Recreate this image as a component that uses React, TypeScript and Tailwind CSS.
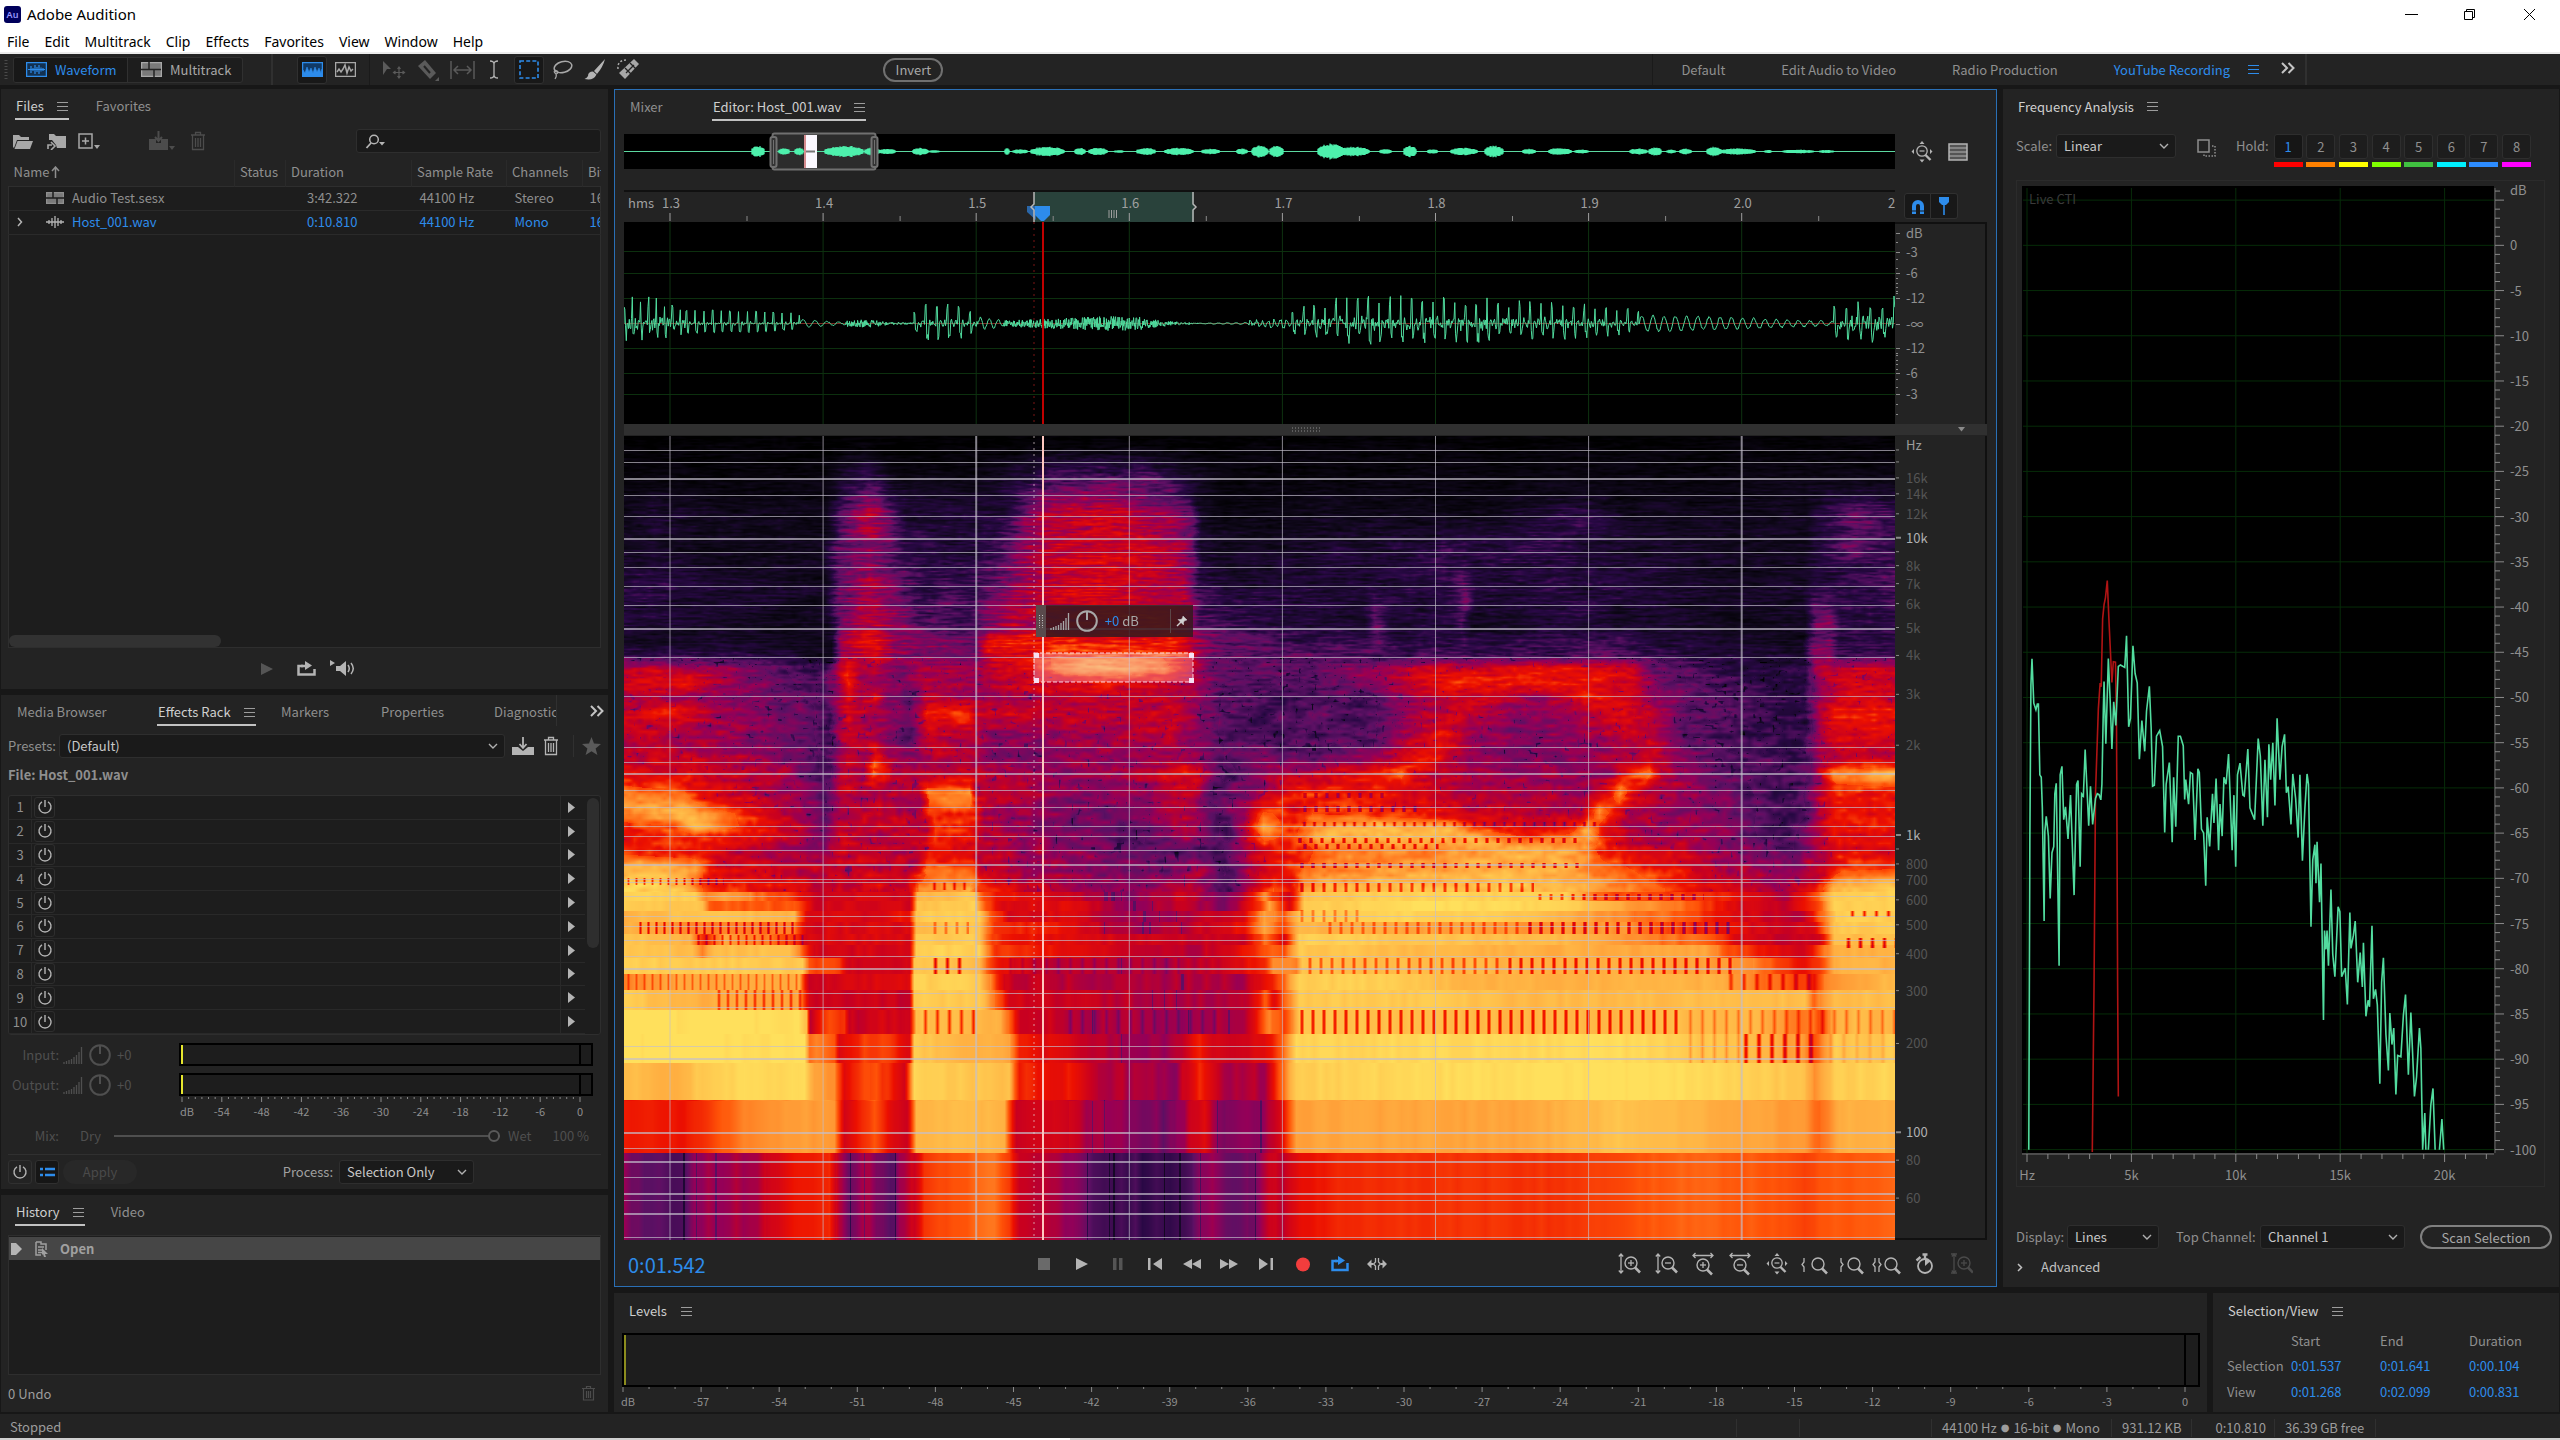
import React, { useLayoutEffect, useMemo, useRef } from 'react';

type Pt = [number, number];

/* ---------- helpers ---------- */

const TRACK_W = 1271;
const SPEC_H = 804;
const px = (u: number) => `${(u / TRACK_W) * 100}%`;
const sy = (v: number) => `${(v / SPEC_H) * 100}%`;

function makeRandom(seed: number) {
  let s = seed;
  return () => {
    s = (s * 1664525 + 1013904223) >>> 0;
    return s / 4294967296;
  };
}

function lerpPts(pts: Pt[], x: number) {
  if (x <= pts[0][0]) return pts[0][1];
  for (let i = 1; i < pts.length; i++) {
    if (x <= pts[i][0]) {
      const [x0, y0] = pts[i - 1];
      const [x1, y1] = pts[i];
      return y0 + ((y1 - y0) * (x - x0)) / (x1 - x0);
    }
  }
  return pts[pts.length - 1][1];
}

const parse = (s: string): Pt[] =>
  s.split(' ').map((p) => {
    const [a, b] = p.split(':');
    return [Number(a), Number(b)] as Pt;
  });

/* ---------- spectrogram data: frequency rows of "time:level" ---------- */

const SMOOTH_ROWS: [number, Pt[]][] = (
  [
    [0, '0:0 1271:0.1'],
    [14, '0:0.2 200:0.2 240:0.8 270:0.2 400:0.3 480:0.8 560:0.3 1271:0.3'],
    [45, '0:0.5 200:0.5 220:1.8 245:2.6 275:0.9 350:0.6 385:1.6 430:3.2 520:3.3 565:1.4 600:0.5 900:0.5 1271:0.8'],
    [80, '0:1 30:1.9 120:1 205:1 218:2.8 245:4.8 265:3.2 280:1.8 340:1.8 375:2 400:4 430:5 500:5.3 550:4.3 568:3.2 576:1.2 600:0.8 720:1 860:1 910:1.6 960:2.3 1000:1.5 1060:1 1180:1 1190:2 1230:3.3 1271:2.6'],
    [110, '0:1 200:0.9 216:3 245:4.3 262:3.4 280:2 350:1.6 385:3.2 420:5 490:5.4 550:4.8 566:3.8 575:1.5 600:1 700:1.6 810:2 820:3 832:2.2 930:2.2 1000:1.3 1180:1 1230:3.3 1271:2.3'],
    [150, '0:2.4 60:1.8 100:1.6 200:1.2 214:3.2 245:4.6 270:3.9 300:2.4 345:2.4 372:3.2 395:4.5 450:5.5 520:5.6 558:4.9 573:2.4 620:1.6 760:1.9 825:2.2 838:3.4 850:2 960:1.9 1100:1.4 1180:1.2 1195:2 1250:2.2 1271:3'],
    [190, '0:1.5 200:1.1 213:3.5 240:5.2 262:4.6 300:3.1 345:2.8 364:4 385:5 450:5.7 540:5.7 563:4.9 578:3 640:2.1 740:1.5 752:3.2 770:1.5 830:1.8 840:2.8 850:1.3 960:1.8 1100:1 1180:1 1190:3.4 1205:3.4 1215:2.2 1271:2.2'],
    [206, '0:1.2 100:1.2 206:1 215:4.6 240:5.8 252:6.2 270:4.6 310:3.8 350:3.6 365:6 400:6.8 450:6.6 550:6.5 570:4.8 590:3.4 640:3 740:2.2 752:3 770:2 1000:2.6 1040:1.6 1180:1.2 1190:3.8 1205:3.8 1215:2.6 1271:2.2'],
    [219, '0:2.4 60:2 180:1.4 206:1.2 216:4.8 250:5.6 270:4.5 310:3.8 350:3.8 365:5.4 400:5.8 425:7 460:7.6 520:7.4 560:6.2 572:4.6 590:3.2 640:3 740:2.6 1000:2.8 1040:2 1180:1.6 1190:4 1205:4 1215:2.6 1271:2.4'],
    [232, '0:4.8 20:5.2 100:4.4 140:3.6 200:2 212:4.5 222:6.2 236:4.6 250:5 280:3.8 300:4.8 345:4.6 365:5 410:6 430:7.4 460:8.2 540:7.6 562:5.8 585:3.6 680:3.5 720:4 800:5.2 850:5.6 960:6.2 1010:5.5 1030:3.6 1100:2 1180:1.8 1192:4.4 1210:4.8 1220:5.4 1271:5.4'],
    [246, '0:5.5 60:6.2 90:4.9 120:4 190:2.6 212:4.5 222:6.4 236:4.6 280:3.6 300:4.9 350:4.5 370:4.7 430:5.8 480:6.2 560:5 600:3 650:2.6 700:3.2 770:4.6 830:6.6 900:6.2 960:6.2 1010:5.4 1030:4 1060:3 1150:2 1180:1.8 1195:4.3 1215:5.4 1271:5.4'],
    [262, '0:4.9 90:4.4 120:3.8 190:2.8 212:4.4 224:5.8 236:4.6 250:6 262:4.2 285:3.2 300:4.9 350:4.6 370:4.4 450:5 560:4.8 600:2.8 650:2.4 690:2.6 740:2.4 770:4 830:5.2 880:4.8 920:4 960:6.2 1010:5.6 1030:4 1100:2.8 1150:2 1180:1.8 1195:4.6 1215:5.4 1271:5.4'],
    [277, '0:5.2 40:6.4 90:4.6 180:3.6 205:2.2 215:4.5 225:5.6 245:4.6 285:3.4 300:5.1 305:6.6 345:6.6 352:5.2 400:5.4 480:5 550:5.2 600:2.8 650:2.6 700:3 740:2.6 790:4.5 850:5.4 890:3.8 960:4.8 1000:6 1030:5 1060:3.2 1100:3.2 1150:2.2 1180:2 1195:4.8 1210:6.3 1271:6.4'],
    [300, '0:4.8 90:4.4 180:3.4 205:2.2 215:4.6 225:5.2 245:4.8 285:3.4 300:5 345:4.8 370:3.8 480:4.6 550:5 600:2.8 650:2.6 700:2.6 750:2.8 790:4.8 825:6.2 850:4.4 890:3.6 960:4.2 1000:5 1030:4.8 1060:3 1150:2 1180:2 1195:4.6 1210:5.6 1271:5.6'],
    [322, '0:5 90:5 180:3.8 200:2.6 212:4.6 222:5.4 240:4.4 250:6.4 262:4.6 290:4 310:5 345:4.8 370:3.8 450:4.2 560:4.7 600:3 640:4 690:3.3 730:4 770:5 800:6.6 820:5 850:4.4 900:3.8 980:4.3 1020:5.2 1040:4.6 1080:3.6 1150:2.6 1180:2.4 1195:4.5 1215:5.2 1271:5.2'],
    [337, '0:6 90:5.2 150:5 190:3.2 205:2.4 215:5 225:5.4 240:4.4 250:7.2 260:6.6 268:5 300:5 345:5 370:4.8 450:4.2 520:4.7 560:6.2 580:4.8 600:2.5 640:4.2 670:5 700:5.2 750:6 775:7.4 790:5.8 815:4.8 900:4.4 985:4.4 1008:7 1022:7.6 1034:5.2 1080:3.6 1150:2.5 1185:3 1195:5 1208:7.6 1271:8.2'],
    [357, '0:7.6 60:7.2 80:5.6 180:4.2 200:3.2 215:5 260:4.6 295:5 305:7.8 345:7.8 352:5 380:5 450:4 520:4.1 570:5.2 590:3.2 620:4 645:5 680:6.6 760:6 850:4.8 960:4.4 982:6 996:7.9 1010:6.2 1030:4.7 1060:4.2 1120:3.2 1170:2.2 1190:4.5 1210:6.4 1271:6.4'],
    [377, '0:7.8 60:8.4 85:7.8 140:6 170:4.8 200:3.6 213:5 230:5.2 250:5.2 295:4.8 305:6.6 350:6.8 360:4.6 480:3.6 560:5 590:3 620:4.5 640:7.2 660:6.8 672:5.8 690:7 780:6.4 870:5 955:4.6 975:7.9 990:6.6 1006:4.8 1050:4.1 1100:3.9 1150:2.6 1180:2.6 1195:5 1210:6.2 1271:6.2'],
    [390, '0:6.6 50:7 70:8.4 120:6.8 180:5 200:3.5 215:5.2 300:5 310:6.9 345:6.7 360:4.7 420:4 520:3.1 560:4.8 600:2.6 620:5 640:8 655:7.2 670:6.6 690:7.8 760:8.3 820:8.3 850:6.6 900:5.8 945:6 962:8 978:6.4 1000:4.8 1100:4.2 1160:2 1190:4.5 1210:6 1271:6'],
    [401, '0:6.4 60:6.4 120:6 180:5 200:3.5 215:5.2 300:5 310:6.6 345:6.4 360:4.7 420:4 520:2.9 560:4.8 600:2.6 620:5 640:7.4 655:7 670:6.8 690:8.3 800:8.4 850:8.3 900:7 945:7.4 965:8.2 980:6 1000:5 1100:4.2 1160:2.2 1190:4.5 1210:6 1271:6'],
    [413, '0:6.5 80:6 100:5.2 200:3.8 215:5.2 290:5 310:5.8 350:6 360:5 450:4.2 520:3.1 590:3 620:5 650:6.4 672:6 690:7.2 800:7.6 880:8.2 940:8 962:7.6 985:5.8 1040:5.4 1100:4.2 1170:3 1195:5 1210:6 1271:6'],
    [430, '0:8.2 70:7.8 90:5.6 190:5 215:5.4 250:5.4 295:5 305:7 350:7 358:5 450:4.2 540:3.5 570:4.6 600:2.8 625:4.8 650:5.5 675:6.8 700:7.6 850:8 940:8.2 970:7.4 1000:7 1060:6 1090:4.8 1170:4.1 1195:5 1215:6.6 1271:6.8'],
    [452, '0:8.8 60:8.5 78:7 100:6.5 160:6 190:5 215:5.7 235:5 255:5.7 285:5 295:7.6 345:8.2 355:6.6 400:5.2 500:3.8 570:4.8 605:3 630:5.4 650:7 668:5.8 680:8 760:8.5 900:8.6 980:7.8 1040:7 1080:5.5 1160:4.3 1190:5.5 1210:8.4 1271:8.7'],
  ] as [number, string][]
).map(([v, s]) => [v, parse(s)]);

const BAND_ROWS: [number, Pt[]][] = (
  [
    [465, '0:8.8 70:8.7 82:7.6 100:8 160:6.8 190:5 240:5.5 285:5.2 293:8.2 350:8.6 360:6.5 380:6 450:5 500:3.8 560:5 600:3.4 630:6 640:7.6 665:5 680:8.5 800:8.8 940:8.7 980:7 1060:6.6 1110:6 1160:4.6 1190:7 1210:8.7 1271:8.7'],
    [475, '0:8.7 78:8.5 85:7.2 170:7 190:5.2 240:5.5 285:5.2 293:8.5 350:8.7 362:6.8 380:5.6 450:5.6 500:4 560:5 600:3.6 630:6 645:8 665:5.4 680:8.6 800:9 940:8.8 980:8.2 1060:7.4 1110:5.6 1160:4.6 1190:6.6 1210:8.7 1271:8.7'],
    [486, '0:8.2 78:8.6 170:8.2 182:5.5 240:5.4 285:6 292:8.6 355:8.7 368:7 385:5.4 450:5.6 490:4.2 560:4.4 620:5.5 640:8 660:7 675:8.6 800:8.8 900:8.6 980:7.8 1060:7 1110:5.5 1180:4.8 1195:7 1212:8.7 1271:8.7'],
    [498, '0:8.2 78:7.6 170:7.4 182:5.4 285:5.6 292:8.4 355:8.6 370:6.5 450:5.8 490:4.3 560:4.6 620:6 640:8 660:7 675:8.3 760:8.1 900:7.8 1000:7.8 1060:6.6 1160:5 1190:5.5 1210:8.6 1271:8.6'],
    [509, '0:8.6 65:8.2 80:6.4 100:8 165:7 182:5.5 285:5.5 292:8.6 355:8.6 368:6.5 400:6 480:5.4 560:5 620:5 640:7.4 660:5.6 675:8.7 940:8.3 1090:7 1110:5.5 1160:5 1195:5.2 1210:8.4 1271:8.4'],
    [522, '0:8.5 68:8.4 78:7.6 90:8.4 165:8.5 180:7 190:5.2 285:5.4 292:8.8 355:8.7 370:6.6 430:6 480:5.4 560:4.6 610:5.5 640:7 660:7 675:8.6 850:8.2 1080:8 1110:6.8 1160:5.6 1180:5.4 1210:8.2 1271:8.2'],
    [538, '0:8.7 178:8.6 185:6.8 215:6.6 225:5.2 285:5.4 290:8.6 355:8.4 372:6 400:5.2 500:4.5 560:4.6 600:5 640:6.4 650:7.6 672:7.6 678:8.5 1000:8.1 1120:7.8 1180:5.8 1195:6.5 1210:8.2 1271:8.2'],
    [554, '0:7.6 40:8 175:8.2 185:4.8 220:5.4 285:5.6 290:8.7 355:8.7 370:7 380:5 480:4.5 620:4.5 650:6.5 675:8.7 760:8.7 850:8.2 1090:8.2 1180:6.8 1190:5.8 1200:7.6 1271:8.4'],
    [574, '0:8.7 60:8.2 175:8 185:5.2 285:5 290:8.6 355:8.6 372:7.4 385:5.4 480:4.8 560:4.6 620:4.5 640:7 650:5.8 675:8.6 800:8.6 900:8.3 1180:8.4 1190:7.2 1210:8.4 1271:8.4'],
    [598, '0:9 172:9 182:8.5 186:5 205:6.8 220:6.6 225:4.8 255:5.4 285:5 292:8.5 376:8.2 388:6.8 396:5.2 560:4 620:4.6 645:7.6 660:6.5 675:8.5 900:8.3 1130:8.3 1190:7.2 1200:6.8 1210:8.3 1271:8.3'],
    [627, '0:9 180:9 185:7.4 210:7.2 215:5.4 240:6.8 265:6.4 285:5.5 290:8.6 385:8 395:6 440:5.4 480:4.7 540:4 575:6 600:5 640:5.5 655:7 672:8.8 1000:8.9 1130:8.4 1180:7.8 1190:7 1210:8.6 1271:8.6'],
    [664, '0:8.4 50:8.2 90:8.8 180:8.9 190:8 210:7.8 220:5.5 245:7 262:6.6 280:5.2 290:8.8 385:8.4 395:6.2 450:6 480:4.7 550:4 575:6.4 600:4.6 640:4.5 655:7 672:8.7 900:9 1060:9 1180:8.5 1190:7.6 1210:8.7 1271:8.8'],
    [717, '0:6.2 60:6 120:7.6 180:7.9 210:7.8 220:5.2 250:7 270:5.5 283:5 292:8.2 340:8.4 380:8.2 392:5 430:5.4 470:4.3 520:3.5 550:3.4 565:5 580:5.6 600:3.6 640:4.2 655:5.4 672:8 900:8 1000:8.5 1180:7.8 1195:7.2 1215:8.2 1271:8.2'],
    [804, '0:4 20:2.7 60:2.9 70:4 90:4 130:4.6 170:6 205:6.4 215:4.2 225:3.4 245:4.4 260:3.2 270:2.8 275:4 290:5 300:6.6 370:7.4 385:6.6 395:5 430:4.6 460:3.2 480:2.3 560:2.4 575:4 600:3.6 625:3.2 645:4.8 660:5 675:5.8 720:6.4 850:6.5 950:6.5 1050:7.2 1160:7 1180:6.7 1195:7 1271:7.2'],
  ] as [number, string][]
).map(([v, s]) => [v, parse(s)]);

/* dashed dark rows: top, bottom, from, to, period, depth */
const DASHES: [number, number, number, number, number, number][] = [
  [486, 498, 12, 175, 8, 2.4],
  [499, 509, 70, 180, 8, 1.6],
  [538, 554, 0, 178, 8, 1],
  [554, 574, 90, 178, 9, 1.8],
  [442, 449, 0, 100, 8, 2.2],
  [574, 598, 295, 352, 12, 2],
  [522, 538, 305, 345, 12, 3],
  [486, 498, 305, 345, 11, 1.4],
  [446, 454, 305, 345, 10, 1.8],
  [370, 376, 675, 800, 11, 2.6],
  [357, 362, 675, 760, 11, 2],
  [386, 391, 675, 975, 10, 2.2],
  [402, 407, 670, 960, 11, 2.6],
  [408, 413, 675, 820, 11, 2.4],
  [427, 432, 672, 960, 11, 3.2],
  [447, 456, 672, 910, 11, 2.4],
  [458, 464, 910, 1080, 11, 2.4],
  [474, 486, 672, 740, 11, 1.4],
  [486, 498, 700, 900, 11, 1.4],
  [486, 498, 900, 1110, 11, 3],
  [522, 538, 680, 880, 11, 1.8],
  [522, 538, 880, 1110, 11, 2.6],
  [538, 554, 1100, 1190, 13, 1.6],
  [574, 598, 672, 1060, 11, 2.8],
  [574, 598, 1060, 1271, 12, 1],
  [598, 627, 1060, 1120, 12, 0.8],
  [598, 627, 1115, 1195, 13, 2.8],
  [598, 627, 1200, 1271, 13, 0.5],
  [475, 481, 1222, 1271, 12, 2.6],
  [502, 512, 1218, 1271, 12, 3],
  [574, 598, 440, 600, 12, 1],
  [522, 538, 380, 560, 12, 0.7],
];

const PALETTE: [number, number, number][] = [
  [0, 0, 0],
  [16, 8, 28],
  [40, 8, 68],
  [92, 16, 100],
  [148, 0, 88],
  [200, 0, 32],
  [236, 16, 0],
  [255, 84, 8],
  [255, 166, 60],
  [255, 224, 92],
];

function paintSpectrogram(ctx: CanvasRenderingContext2D) {
  const img = ctx.createImageData(TRACK_W, SPEC_H);
  const rand = makeRandom(77);
  const NW = 512;
  const NH = 512;
  const noise = new Float32Array(NW * NH);
  for (let i = 0; i < noise.length; i++) noise[i] = rand() * 2 - 1;
  const sample = (x: number, y: number) => {
    const xi = Math.floor(x);
    const yi = Math.floor(y);
    const fx = x - xi;
    const fy = y - yi;
    const at = (a: number, b: number) => noise[(b & 511) * NW + (a & 511)];
    const top = at(xi, yi) * (1 - fx) + at(xi + 1, yi) * fx;
    const bot = at(xi, yi + 1) * (1 - fx) + at(xi + 1, yi + 1) * fx;
    return top * (1 - fy) + bot * fy;
  };
  const expand = ([, pts]: [number, Pt[]]) => {
    const row = new Float32Array(TRACK_W);
    for (let x = 0; x < TRACK_W; x++) row[x] = lerpPts(pts, x);
    return row;
  };
  const smooth = SMOOTH_ROWS.map(expand);
  const bands = BAND_ROWS.map(expand);
  for (let y = 0; y < SPEC_H; y++) {
    let si = -1;
    let f = 0;
    let bi = 0;
    if (y < 456) {
      si = 0;
      while (si < SMOOTH_ROWS.length - 2 && SMOOTH_ROWS[si + 1][0] <= y) si++;
      f = Math.min(1, (y - SMOOTH_ROWS[si][0]) / (SMOOTH_ROWS[si + 1][0] - SMOOTH_ROWS[si][0]));
    } else {
      while (bi < BAND_ROWS.length - 1 && BAND_ROWS[bi][0] <= y) bi++;
    }
    /* noise row index whose cell height grows from 2px to 5px down the log scale */
    const cellRow = y < 222 ? 0 : 78 * Math.log(1 + (y - 222) / 156);
    const active = DASHES.filter((d) => y >= d[0] && y < d[1]);
    for (let x = 0; x < TRACK_W; x++) {
      let l: number;
      if (si >= 0) {
        const wob = Math.round(sample(x / 30, y / 14) * 4);
        const xs = Math.max(0, Math.min(TRACK_W - 1, x + wob));
        l = smooth[si][xs] * (1 - f) + smooth[si + 1][xs] * f;
        if (y < 222) {
          l *= 0.93;
          const damp = Math.min(1, 0.35 + l * 0.25);
          l += (sample(x / 14, y / 1.5) * 0.8 + sample(x / 5 + 90, y / 1.8) * 0.45 + sample(x / 40, y / 12) * 0.4) * damp;
        } else {
          if (l > 3 && l < 7) l -= 0.25;
          const amp = l > 7 ? 0.3 : 0.6;
          l += (sample(x / 16, cellRow + 40) + sample(x / 5 + 30, cellRow + 200) * 0.7) * amp;
          const dot = sample(x / 3.2 + 210, cellRow + 117);
          if (dot > 0.6 && l < 5.4) l -= (dot - 0.6) * 5;
        }
      } else {
        l = bands[bi][x];
        const amp = y > 664 && l > 5 ? 0.1 : l > 7.5 ? 0.12 : l < 5 ? 0.4 : 0.28;
        l += sample(x / (y > 664 ? 7 : 6), bi * 7) * amp;
        if (l < 4.4 && sample(x / 2.4 + 11, bi * 5) > 0.8) l -= 1.1;
      }
      for (const d of active) {
        if (x >= d[2] && x < d[3]) {
          const ph = ((x - d[2]) % d[4]) / d[4];
          const w = Math.max(0, 1 - Math.abs(ph - 0.5) * 4.4);
          l -= w * d[5];
        }
      }
      l = Math.max(0, Math.min(9, l));
      const k = Math.min(8, Math.floor(l));
      const t = l - k;
      const a = PALETTE[k];
      const b = PALETTE[k + 1];
      const o = (y * TRACK_W + x) * 4;
      img.data[o] = a[0] + (b[0] - a[0]) * t;
      img.data[o + 1] = a[1] + (b[1] - a[1]) * t;
      img.data[o + 2] = a[2] + (b[2] - a[2]) * t;
      img.data[o + 3] = 255;
    }
  }
  ctx.putImageData(img, 0, 0);
}

/* ---------- waveform ---------- */

function buildWave() {
  const rand = makeRandom(9);
  const seg: { a: number; b: number; period: number; up: Pt[]; down: number; noise: Pt[] }[] = [
    { a: 0, b: 62, period: 8, up: [[0, 20], [20, 23], [62, 18]], down: 0.65, noise: [[0, 7], [62, 5]] },
    { a: 62, b: 176, period: 8.7, up: [[62, 13], [100, 13], [140, 12], [176, 9]], down: 0.9, noise: [[0, 1], [1271, 1]] },
    { a: 176, b: 222, period: 12, up: [[176, 4], [222, 1]], down: 0.8, noise: [[0, 0.5], [1271, 0.5]] },
    { a: 222, b: 290, period: 3, up: [[222, 4], [247, 5], [262, 2], [290, 1]], down: 1, noise: [[222, 0.5], [290, 0.5]] },
    { a: 290, b: 354, period: 11, up: [[290, 11], [305, 18], [330, 17], [354, 10]], down: 1.1, noise: [[0, 3], [1271, 3]] },
    { a: 354, b: 380, period: 9, up: [[354, 6], [380, 3]], down: 1, noise: [[0, 1], [1271, 1]] },
    { a: 380, b: 574, period: 2, up: [[380, 4], [420, 6], [480, 9], [512, 9], [535, 4], [574, 0.6]], down: 1, noise: [[0, 0], [1271, 0]] },
    { a: 574, b: 625, period: 9, up: [[574, 0.3], [625, 1]], down: 1, noise: [[0, 0.2], [1271, 0.2]] },
    { a: 625, b: 668, period: 6, up: [[625, 2], [648, 4], [668, 4]], down: 1, noise: [[0, 2], [1271, 2]] },
    { a: 668, b: 1015, period: 10.8, up: [[668, 10], [685, 17], [720, 22], [770, 24], [850, 22], [900, 20], [960, 17], [1000, 14], [1015, 11]], down: 0.88, noise: [[668, 3], [720, 6], [850, 6], [960, 4], [1015, 2]] },
    { a: 1015, b: 1210, period: 11.2, up: [[1015, 8], [1060, 7], [1130, 5], [1180, 3], [1210, 2]], down: 1.25, noise: [[1015, 1.2], [1210, 0.8]] },
    { a: 1210, b: 1271, period: 12, up: [[1210, 14], [1230, 18], [1271, 21]], down: 0.9, noise: [[0, 7], [1271, 7]] },
  ];
  let d = 'M0 0';
  for (const s of seg) {
    const step = s.period < 4 ? 0.4 : 0.75;
    for (let x = s.a; x < s.b; x += step) {
      const ph = ((x - s.a) % s.period) / s.period;
      const up = lerpPts(s.up, x);
      const n = lerpPts(s.noise, x) * (rand() * 2 - 1);
      let y: number;
      if (s.period < 4) y = (rand() * 2 - 1) * up * 0.8;
      else if (up > 8) {
        if (ph < 0.12) y = up;
        else if (ph < 0.3) y = -up * s.down * (0.5 + ph);
        else y = Math.sin(ph * 18) * up * 0.22 * (1 - ph);
      } else y = Math.sin(ph * Math.PI * 2) * up;
      d += `L${x.toFixed(1)} ${(-(y + n)).toFixed(1)}`;
    }
  }
  return d;
}

const OVERVIEW: [number, number, number][] = [
  [127, 141, 5], [154, 166, 2.6], [170, 180, 3], [200, 240, 5], [240, 256, 3], [255, 272, 2.2], [288, 305, 3], [305, 316, 0.8],
  [380, 386, 2.6], [388, 404, 1.6], [406, 441, 4], [450, 462, 3], [464, 484, 3], [490, 500, 0.8], [512, 532, 3], [540, 570, 3], [577, 596, 2], [612, 624, 2.2], [627, 645, 5], [645, 660, 5],
  [693, 722, 7], [715, 746, 4], [755, 768, 1.8], [779, 793, 5], [803, 814, 1.6], [826, 854, 3], [860, 880, 5], [898, 912, 2], [924, 948, 2.8], [950, 965, 1.4],
  [1005, 1024, 2.2], [1024, 1038, 3.4], [1042, 1052, 1.4], [1055, 1068, 2.2], [1082, 1098, 4], [1096, 1132, 2.6], [1140, 1148, 1], [1158, 1190, 1.3], [1195, 1210, 1],
];

function buildOverview() {
  const rand = makeRandom(5);
  let d = '';
  for (const [a, b, h] of OVERVIEW) {
    for (let x = a; x <= b; x += 1) {
      const e = Math.sqrt(Math.max(0, Math.sin(((x - a) / (b - a)) * Math.PI)));
      const v = 0.5 + h * e * (0.75 + rand() * 0.35);
      d += `M${x} ${(-v).toFixed(1)}V${v.toFixed(1)}`;
    }
  }
  return d;
}

const SPECTRUM =
  '83,955 86,300 89,-30 92,-86 97,8 103,22 107,10 110,10 114,160 118,165 121,230 126,470 128,280 132,248 138,290 143,422 148,325 153,312 156,200 160,178 168,565 171,160 176,142 181,255 186,228 193,296 200,203 210,415 217,180 221,172 227,355 231,200 236,205 241,106 251,268 256,184 262,265 270,210 275,200 280,202 285,213 288,180 292,20 294,-38 299,94 306,-87 311,0 316,105 321,5 327,55 334,-70 340,-73 352,-68 357,-135 363,58 368,40 375,-114 381,-55 387,-35 393,127 400,45 408,110 413,25 421,-28 426,60 430,184 435,182 441,78 450,66 458,100 464,282 468,180 477,134 485,303 489,165 495,270 502,78 508,78 516,98 520,212 523,170 531,222 536,155 542,158 549,298 557,147 561,155 567,275 573,283 579,395 583,250 590,312 598,200 602,262 608,168 615,320 619,222 625,290 630,165 636,180 643,116 653,320 658,203 663,355 668,160 675,135 683,203 687,205 697,105 703,230 708,240 716,255 726,83 732,120 739,268 745,128 752,250 756,95 761,170 767,92 773,225 779,40 787,170 793,100 800,74 805,198 810,185 818,265 823,158 831,210 838,293 843,160 850,342 857,230 863,158 867,180 874,482 879,340 885,308 888,390 891,302 898,430 902,348 909,680 912,490 916,530 919,490 923,565 930,403 935,540 941,588 950,440 955,450 960,588 970,570 976,647 983,452 986,528 993,500 998,470 1005,600 1012,537 1018,610 1021,516 1028,672 1034,638 1038,652 1045,480 1049,635 1055,615 1060,648 1067,815 1072,600 1077,548 1084,710 1091,787 1095,665 1101,732 1106,697 1112,838 1117,755 1126,758 1133,670 1139,626 1147,796 1154,664 1164,842 1170,800 1178,697 1182,740 1187,955 1193,877 1196,955';
const SPECTRUM_TAIL = ['1203,955 1210,860 1216,825 1222,955', '1234,955 1241,890 1246,955'];
const HELD =
  '261,960 266,600 270,200 278,20 283,-35 286,-27 290,-171 294,-201 298,-216 303,-252 308,-163 316,-36 320,-80 326,-79 329,60 332,600 334,842';

/* ---------- small parts ---------- */

const Svg = ({ w, h, children, className = '' }: { w: number; h: number; children: React.ReactNode; className?: string }) => (
  <svg width={w} height={h} viewBox={`0 0 ${w} ${h}`} fill="none" stroke="currentColor" strokeWidth="1.5" className={`shrink-0 ${className}`} aria-hidden="true">
    {children}
  </svg>
);

const MenuIcon = ({ className = 'text-[#9c9c9c]' }: { className?: string }) => (
  <Svg w={11} h={11} className={className}>
    <path d="M0 1.5h11M0 5.5h11M0 9.5h11" strokeWidth="1.2" />
  </Svg>
);

const Chevrons = () => (
  <Svg w={14} h={12} className="text-[#c4c4c4]">
    <path d="M1 1l5 5-5 5M7.500 1l5 5-5 5" strokeWidth="2" />
  </Svg>
);

function Tab({ label, active, onMenu }: { label: string; active?: boolean; onMenu?: boolean }) {
  return (
    <button
      className={`flex h-[31px] shrink-0 items-center gap-[13px] whitespace-nowrap border-b-2 px-px pt-[5px] ${
        active ? 'border-[#c2c2c2] text-[#cfcfcf]' : 'border-transparent text-[#8f8f8f]'
      }`}
    >
      {label}
      {onMenu && <MenuIcon />}
    </button>
  );
}

function Select({ id, value, className }: { id: string; value: string; className: string }) {
  return (
    <div className={`relative h-6 shrink-0 ${className}`}>
      <select id={id} defaultValue={value} className="h-6 w-full appearance-none rounded-[3px] border border-[#2e2e2e] bg-[#1a1a1a] pl-[7px] pr-5 leading-4 text-[#c8c8c8] outline-none">
        <option>{value}</option>
      </select>
      <svg className="pointer-events-none absolute right-[7px] top-[9px] text-[#b0b0b0]" width="10" height="7" fill="none" stroke="currentColor" strokeWidth="1.400" aria-hidden="true">
        <path d="M1 1l4 4 4-4" />
      </svg>
    </div>
  );
}

const TrashIcon = ({ className = '' }: { className?: string }) => (
  <Svg w={16} h={20} className={className}>
    <path d="M1 4h14M5.500 4V1.500h5V4M2.500 4.500v14h11v-14M5.500 7v9M8 7v9M10.500 7v9" strokeWidth="1.300" />
  </Svg>
);

const Power = () => (
  <Svg w={16} h={16}>
    <path d="M5 2.800a6 6 0 1 0 6 0M8 1v7" strokeWidth="1.400" />
  </Svg>
);

const MultiIcon = () => (
  <Svg w={21} h={15}>
    <rect x="0.5" y="0.5" width="20" height="14" fill="#7a7a7a" stroke="#a8a8a8" />
    <path d="M0 7.500h20M8 0v7M13 7v8" stroke="#232323" strokeWidth="1.500" />
  </Svg>
);

const Ramp = () => (
  <Svg w={20} h={18}>
    {[0, 1, 2, 3, 4, 5, 6, 7].map((i) => (
      <path key={i} d={`M${1 + i * 2.5} 18v-${[2, 3, 4, 5, 7, 9, 12, 17][i]}`} strokeWidth="1.3" />
    ))}
  </Svg>
);

const Knob = () => (
  <Svg w={22} h={22}>
    <circle cx="11" cy="11" r="9.800" strokeWidth="2" />
    <path d="M11 2v8" strokeWidth="2" />
  </Svg>
);

/* ---------- top bars ---------- */

const MENUS = ['File', 'Edit', 'Multitrack', 'Clip', 'Effects', 'Favorites', 'View', 'Window', 'Help'];

function TitleBar() {
  return (
    <header className="bg-white font-['Noto_Sans',sans-serif] text-black">
      <div className="flex h-7 items-center">
        <div className="ml-1 flex size-[17px] items-center justify-center rounded-[3px] bg-[#00005b] text-[9px] font-semibold leading-none text-[#9999ff]">Au</div>
        <h1 className="ml-[6px] text-[15px]">Adobe Audition</h1>
        <div className="ml-auto flex items-center">
          <button aria-label="Minimize" className="flex w-[58px] justify-center"><Svg w={13} h={12}><path d="M0 6.500h13" strokeWidth="1" /></Svg></button>
          <button aria-label="Restore" className="flex w-[58px] justify-center"><Svg w={13} h={13}><path d="M1.500 3.500h8v8h-8zM3.500 3.500v-2h8v8h-2" strokeWidth="1" /></Svg></button>
          <button aria-label="Close" className="flex w-[62px] justify-center"><Svg w={13} h={13}><path d="M1 1l11 11M12 1L1 12" strokeWidth="1" /></Svg></button>
        </div>
      </div>
      <nav className="flex h-[26px] items-center gap-[15px] border-b-2 border-[#ececec] pl-[7px] pt-[3px] text-[14px]">
        {MENUS.map((m) => <button key={m}>{m}</button>)}
      </nav>
    </header>
  );
}

function Toolbar() {
  const box = 'flex h-7 w-[30px] items-center justify-center rounded-[3px] border border-[#303030] bg-[#181818]';
  return (
    <div className="flex h-[31px] items-center bg-[#232323] text-[#a8a8a8]">
      <svg width="13" height="20" className="shrink-0" aria-hidden="true">
        <path d="M6 0v20" stroke="#4a4a4a" strokeWidth="3" strokeDasharray="1 2" />
      </svg>
      <div className="flex h-[26px] overflow-hidden rounded-[3px] border border-[#303030] bg-[#1d1d1d]">
        <button className="flex w-[114px] items-center gap-2 border-r border-[#303030] bg-[#181818] pl-3 text-[#2d8ceb]">
          <Svg w={21} h={15}><rect x="0.5" y="0.5" width="20" height="14" fill="#123050" /><path d="M2 7.500h17M5 4v7M7 6v3M9 3v9M11 5v5M13 3v9M15 5.500v4M17 6v3" strokeWidth="1.2" /></Svg>
          Waveform
        </button>
        <button className="flex w-[114px] items-center gap-2 pl-[13px]"><MultiIcon />Multitrack</button>
      </div>
      <div className="ml-7 h-[31px] w-[2px] bg-[#303030]" />
      <div className="ml-6 flex items-center">
        <button aria-label="Spectral display" className={box}><Svg w={21} h={15} className="text-[#2d8ceb]"><rect x="0.5" y="0.5" width="20" height="14" fill="#113a66" /><path d="M1 14V8l2 3 2-6 2 5 2-4 2 5 2-6 2 5 2-4 2 5 1-4v7z" fill="#2d8ceb" strokeWidth="0.6" /></Svg></button>
        <button aria-label="Pitch display" className="ml-2"><Svg w={21} h={15}><rect x="0.5" y="0.5" width="20" height="14" /><path d="M2 10l2-3 2 3 2-3 2-4 2 8 2-6 2 4 2-2" /></Svg></button>
      </div>
      <div className="ml-[13px] h-[31px] w-px bg-[#1a1a1a]" />
      <div className="ml-[12px] flex items-center gap-[11px] text-[#5a5a5a]">
        <button aria-label="Move tool"><Svg w={24} h={20}><path d="M1 1l8 8H5l-4 6z" fill="currentColor" stroke="none" /><path d="M17 7v11M11.500 12.500h11M15.500 9L17 7l1.500 2M15.500 16l1.500 2 1.500-2M13.500 11l-2 1.500 2 1.500M20.500 11l2 1.500-2 1.500" strokeWidth="1.2" /></Svg></button>
        <button aria-label="Razor tool"><Svg w={22} h={22}><path d="M1 7l7-6 11 13-6 6z" fill="currentColor" stroke="none" /><path d="M7 7l6 7" stroke="#232323" strokeWidth="2" /><path d="M22 18v4h-4z" fill="currentColor" stroke="none" /></Svg></button>
        <button aria-label="Slip tool"><Svg w={25} h={18}><path d="M1 0v18M24 0v18M4 9h17M8 5L4 9l4 4M17 5l4 4-4 4" /></Svg></button>
        <button aria-label="Time selection tool" className="ml-[3px] text-[#b4b4b4]"><Svg w={10} h={19}><path d="M1 1q4 0 4 3v11q0 3-4 3M9 1q-4 0-4 3v11q0 3 4 3" strokeWidth="1.300" /></Svg></button>
        <button aria-label="Marquee selection tool" className={`${box} ml-1 text-[#2d8ceb]`}><Svg w={20} h={19}><rect x="1" y="1" width="18" height="17" strokeDasharray="4 2.200" strokeWidth="1.600" /></Svg></button>
        <button aria-label="Lasso tool" className="-ml-1 text-[#a8a8a8]"><Svg w={22} h={20}><ellipse cx="12" cy="7" rx="9" ry="5.500" transform="rotate(-15 12 7)" /><path d="M5 10q-3 1-1 3t3-1q-1-2-3-1M5 14q1 2-1 5" strokeWidth="1.2" /></Svg></button>
        <button aria-label="Paintbrush tool" className="text-[#b4b4b4]"><Svg w={22} h={21}><path d="M21 0L10 12l3 3Q19 8 21 0zM9 12.500q-5 0-5 4.500-1 2-3.500 3 9 2 12-4.500z" fill="currentColor" stroke="none" /></Svg></button>
        <button aria-label="Spot healing tool" className="text-[#a8a8a8]"><Svg w={24} h={21}><path d="M2 14L17 0l5 5L8 20z" fill="currentColor" stroke="none" /><path d="M8 9l6 6M13 4l6 6M9 14l8-8" stroke="#232323" strokeWidth="1.300" /><path d="M1 10Q0 1 10 1" strokeDasharray="2 2" /></Svg></button>
      </div>
      <div className="ml-auto flex h-full shrink-0 items-center">
        <button className="mr-[236px] h-6 w-[60px] rounded-full border-2 border-[#707070] leading-none text-[#a8a8a8] min-[2400px]:mr-[709px]">Invert</button>
        <div className="h-full w-px bg-[#1a1a1a]" />
        <div className="flex items-center pl-7 text-[#8f8f8f]">
          {['Default', 'Edit Audio to Video', 'Radio Production'].map((w) => <button key={w} className="mr-14 whitespace-nowrap">{w}</button>)}
          <button className="whitespace-nowrap text-[#2d8ceb]">YouTube Recording</button>
          <span className="ml-[18px] mr-[22px]"><MenuIcon className="text-[#2d8ceb]" /></span>
          <button aria-label="More workspaces" className="pb-[3px]"><Chevrons /></button>
        </div>
        <div className="ml-[10px] h-full w-[2px] bg-[#303030]" />
        <div className="w-[253px] shrink" />
      </div>
    </div>
  );
}

/* ---------- left column ---------- */

function FilesPanel() {
  const head = 'h-[26px] border-r border-[#2a2a2a] p-0 pb-[2px] pl-[5px] text-left font-normal';
  return (
    <section className="flex flex-1 flex-col bg-[#232323] px-[7px]" aria-label="Files">
      <div className="flex gap-[26px] pl-[7px]"><Tab label="Files" active onMenu /><Tab label="Favorites" /></div>
      <div className="mt-[9px] flex h-6 items-center pl-[5px] text-[#a8a8a8]">
        <button aria-label="Open file"><Svg w={20} h={15}><path d="M0 13V1h6l2 2h8v3H4L1 14zM4.500 7H20l-3 8H1.500z" fill="currentColor" stroke="none" /></Svg></button>
        <button aria-label="Import file" className="ml-[14px]"><Svg w={20} h={17}><path d="M2 4V1h5l2 2h10v12h-9l-1-3-4-5H2z" fill="currentColor" stroke="none" /><path d="M1 16V12h4M4 9l4 4-4 4" strokeWidth="1.600" /></Svg></button>
        <button aria-label="New file" className="ml-[11px]"><Svg w={23} h={17}><path d="M1 1h13v14H1zM7.500 4.500v7M4 8h7" /><path d="M16 12h6l-3 4z" fill="currentColor" stroke="none" /></Svg></button>
        <button aria-label="Insert into multitrack" className="ml-12 text-[#4c4c4c]" disabled><Svg w={26} h={20}><path d="M0 8h7v4h5V8h7v11H0z" fill="currentColor" stroke="none" /><path d="M9.500 0v9M6 6l3.500 4L13 6" strokeWidth="2" /><path d="M20 15h6l-3 4z" fill="currentColor" stroke="none" /></Svg></button>
        <button aria-label="Delete" className="ml-[15px] text-[#4c4c4c]" disabled><TrashIcon /></button>
        <label className="ml-auto flex h-6 w-[245px] items-center rounded-[3px] border border-[#2e2e2e] bg-[#1a1a1a] pl-2 text-[#b4b4b4]">
          <Svg w={21} h={15}><circle cx="9" cy="5.500" r="4.300" /><path d="M6 9l-4.500 5" strokeWidth="1.800" /><path d="M14 8h6l-3 3.500z" fill="currentColor" stroke="none" /></Svg>
          <input aria-label="Search files" className="w-full bg-transparent outline-none" />
        </label>
      </div>
      <div className="mt-[7px] flex flex-1 flex-col overflow-hidden">
        <table className="w-full table-fixed border-collapse whitespace-nowrap text-[#8f8f8f]">
          <colgroup><col className="w-[226px]" /><col className="w-[51px]" /><col className="w-[126px]" /><col className="w-[95px]" /><col className="w-[76px]" /><col /></colgroup>
          <thead>
            <tr>
              <th className={head}><span className="inline-flex items-center gap-[2px]">Name<Svg w={9} h={12}><path d="M4.500 12V1.500M1 5l3.500-4L8 5" /></Svg></span></th>
              <th className={head}>Status</th><th className={head}>Duration</th><th className={head}>Sample Rate</th><th className={head}>Channels</th>
              <th className="overflow-hidden p-0 pb-[2px] pl-[5px] text-left font-normal">Bit</th>
            </tr>
          </thead>
          <tbody className="border border-[#2e2e2e] bg-[#1d1d1d]">
            <tr className="h-6 border-b border-[#2a2a2a]">
              <td className="p-0"><span className="flex items-center gap-2 pl-[37px]"><Svg w={18} h={12}><rect x="0.500" y="0.500" width="17" height="11" fill="#7a7a7a" /><path d="M0 6h18M7 0v6M11 6v6" stroke="#1d1d1d" /></Svg>Audio Test.sesx</span></td>
              <td /><td className="p-0 pr-[54px] text-right">3:42.322</td><td className="p-0 pl-2">44100 Hz</td><td className="p-0 pl-2">Stereo</td><td className="overflow-hidden p-0 pl-[7px]">16</td>
            </tr>
            <tr className="h-6 border-b border-[#2a2a2a] text-[#2d8ceb]">
              <td className="p-0"><span className="flex items-center pl-2"><Svg w={6} h={10} className="text-[#b4b4b4]"><path d="M1 1l3.500 4L1 9" /></Svg><Svg w={18} h={12} className="ml-[23px] text-[#b4b4b4]"><path d="M0 6h18M3 4v4M6 2v8M9 0v12M12 2v8M15 4v4" strokeWidth="1.3" /></Svg><span className="ml-2">Host_001.wav</span></span></td>
              <td /><td className="p-0 pr-[54px] text-right">0:10.810</td><td className="p-0 pl-2">44100 Hz</td><td className="p-0 pl-2">Mono</td><td className="overflow-hidden p-0 pl-[7px]">16</td>
            </tr>
          </tbody>
        </table>
        <div className="flex flex-1 items-end border border-t-0 border-[#2e2e2e] bg-[#1d1d1d]"><div className="h-3 w-[212px] rounded-full bg-[#323232]" /></div>
      </div>
      <div className="flex h-[41px] items-center justify-center gap-6 pl-2 text-[#b4b4b4]">
        <button aria-label="Play preview" className="text-[#555]"><Svg w={12} h={12}><path d="M0 0l12 6-12 6z" fill="currentColor" stroke="none" /></Svg></button>
        <button aria-label="Loop preview"><Svg w={19} h={15}><path d="M6 5H1.500v8.500h16V8" strokeWidth="2.500" /><path d="M4 5h5" strokeWidth="2.500" /><path d="M8 0l7 4.500L8 9z" fill="currentColor" stroke="none" /></Svg></button>
        <button aria-label="Auto-play" className="-ml-[10px]"><Svg w={26} h={17}><path d="M0 0l5 3-5 3zM6 6h4l6-5v15l-6-5H6z" fill="currentColor" stroke="none" /><path d="M18 5q2.500 3.500 0 7M21 3q4.500 5.500 0 11" /></Svg></button>
      </div>
    </section>
  );
}

const METER_TICKS = Array.from({ length: 61 }, (_, i) => i);

function EffectsPanel() {
  return (
    <section className="flex h-[494px] flex-col bg-[#232323] px-[7px]" aria-label="Effects Rack">
      <div className="flex items-center">
        <div className="flex flex-1 overflow-hidden border-r border-[#303030] pl-2">
          <div className="w-[141px] shrink-0"><Tab label="Media Browser" /></div>
          <div className="w-[123px] shrink-0"><Tab label="Effects Rack" active onMenu /></div>
          <div className="w-[100px] shrink-0"><Tab label="Markers" /></div>
          <div className="w-[113px] shrink-0"><Tab label="Properties" /></div>
          <Tab label="Diagnostic" />
        </div>
        <button aria-label="More panels" className="-mr-[3px] flex w-[47px] justify-end"><Chevrons /></button>
      </div>
      <div className="mt-2 flex h-6 items-center text-[#8f8f8f]">
        <label htmlFor="presets" className="w-[51px]">Presets:</label>
        <Select id="presets" value="(Default)" className="flex-1" />
        <button aria-label="Save preset" className="ml-[7px] text-[#b4b4b4]"><Svg w={22} h={18}><path d="M0 10h6l5 4 5-4h6v8H0z" fill="currentColor" stroke="none" /><path d="M11 0v10M7.500 7l3.500 4 3.500-4" strokeWidth="1.800" /></Svg></button>
        <button aria-label="Delete preset" className="ml-[9px] text-[#b4b4b4]"><TrashIcon /></button>
        <div className="ml-[14px] h-[22px] w-px bg-[#303030]" />
        <button aria-label="Favorite" className="ml-2 text-[#5a5a5a]"><Svg w={19} h={18}><path d="M9.500 0l2.500 6.500 7 .5-5.400 4.400L15.400 18 9.500 14.300 3.600 18l1.800-6.600L0 7l7-.5z" fill="currentColor" stroke="none" /></Svg></button>
      </div>
      <p className="mt-[6px] h-[22px] font-bold leading-[22px] text-[#8f8f8f]">File: Host_001.wav</p>
      <div className="mt-[9px] flex h-[240px] rounded-[3px] border border-[#2e2e2e] bg-[#1d1d1d]">
        <ol className="flex flex-1 flex-col">
          {METER_TICKS.slice(1, 11).map((n) => (
            <li key={n} className="flex flex-1 items-center border-b border-[#292929] text-[#8f8f8f]">
              <span className="w-[23px] border-r border-[#292929] text-center leading-[22px]">{n}</span>
              <button aria-label={`Power slot ${n}`} className="ml-[2px] flex h-[21px] w-[21px] items-center justify-center rounded-[3px] border border-[#2e2e2e] text-[#b4b4b4]"><Power /></button>
              <button aria-label={`Choose effect ${n}`} className="ml-auto flex h-full w-[25px] items-center border-l border-[#292929] pl-[7px] text-[#b4b4b4]"><Svg w={7} h={11}><path d="M0 0l7 5.500-7 5.500z" fill="currentColor" stroke="none" /></Svg></button>
            </li>
          ))}
        </ol>
        <div className="w-[15px] pt-[2px]"><div className="mx-auto h-[150px] w-3 rounded-full bg-[#2e2e2e]" /></div>
      </div>
      <div className="mt-2 flex flex-col gap-[7px] text-[#4f4f4f]">
        {['Input', 'Output'].map((n) => (
          <div key={n} className="flex h-[23px] items-center">
            <span className="w-[51px] text-right">{n}:</span>
            <span className="ml-1"><Ramp /></span>
            <span className="ml-[6px]"><Knob /></span>
            <span className="ml-[6px] w-[62px]">+0</span>
            <div className="mr-2 flex h-[23px] flex-1 justify-between border-2 border-black bg-[#1d1d1d]"><div className="w-[2px] bg-[#e6e62e]" /><div className="w-3 border-l-2 border-black" /></div>
          </div>
        ))}
      </div>
      <div className="pl-[174px] pr-[21px] text-[11px] text-[#8f8f8f]">
        <svg className="block h-5 w-full overflow-visible" aria-hidden="true">
          {METER_TICKS.map((t) => <line key={t} x1={`${(t / 60) * 100}%`} x2={`${(t / 60) * 100}%`} y1="1" y2={t % 6 ? 3 : 6} stroke="#8a8a8a" />)}
          <text x="5" y="20" textAnchor="middle" fill="currentColor">dB</text>
          {[-54, -48, -42, -36, -30, -24, -18, -12, -6, 0].map((v) => <text key={v} x={`${((60 + v) / 60) * 100}%`} y="20" textAnchor="middle" fill="currentColor">{v}</text>)}
        </svg>
      </div>
      <div className="mt-[9px] flex h-[22px] items-center text-[#4f4f4f]">
        <label htmlFor="mix" className="w-[51px] text-right">Mix:</label>
        <span className="ml-[21px]">Dry</span>
        <input id="mix" type="range" defaultValue={100} disabled className="ml-[13px] h-4 flex-1 appearance-none bg-transparent [&::-webkit-slider-runnable-track]:h-[2px] [&::-webkit-slider-runnable-track]:bg-[#4f4f4f] [&::-webkit-slider-thumb]:-mt-[5px] [&::-webkit-slider-thumb]:size-3 [&::-webkit-slider-thumb]:appearance-none [&::-webkit-slider-thumb]:rounded-full [&::-webkit-slider-thumb]:border-2 [&::-webkit-slider-thumb]:border-[#5a5a5a] [&::-webkit-slider-thumb]:bg-[#232323]" />
        <span className="ml-2">Wet</span><span className="ml-[21px] mr-3">100 %</span>
      </div>
      <div className="mt-[7px] flex flex-1 items-center border-t border-[#303030] text-[#a0a0a0]">
        <button aria-label="Rack power" className="flex size-6 items-center justify-center rounded-[3px] border border-[#303030] text-[#b4b4b4]"><Power /></button>
        <button aria-label="List view" className="ml-[3px] flex size-6 items-center justify-center rounded-[3px] border border-[#303030] bg-[#161616] text-[#2d8ceb]"><Svg w={15} h={10}><path d="M0 2h3M5 2h10M0 8h3M5 8h10" strokeWidth="2.500" /></Svg></button>
        <button disabled className="ml-1 h-6 w-[74px] rounded-full bg-[#282828] text-[#4a4a4a]">Apply</button>
        <label htmlFor="process" className="ml-auto mr-[6px]">Process:</label>
        <Select id="process" value="Selection Only" className="mr-[127px] w-[135px]" />
      </div>
    </section>
  );
}

function HistoryPanel() {
  return (
    <section className="flex h-[217px] flex-col bg-[#232323] px-[7px]" aria-label="History">
      <div className="flex gap-[25px] pl-[7px]"><Tab label="History" active onMenu /><Tab label="Video" /></div>
      <ul className="mt-[9px] flex-1 border border-[#2e2e2e] bg-[#1d1d1d] pt-px">
        <li className="flex h-[23px] items-center bg-[#464646] pl-[2px] font-bold text-[#a0a0a0]">
          <Svg w={11} h={12}><path d="M0 0h5l6 6-6 6H0z" fill="#b4b4b4" stroke="none" /></Svg>
          <Svg w={15} h={16} className="ml-3 mr-[11px]"><path d="M2 1h5v2h5v6M2 1v13h5M4 6h6M4 9h4M4 11.500h4" /><path d="M8 7l6 6h-3l1 3h-2l-1-3-1 1z" fill="currentColor" stroke="none" /></Svg>
          Open
        </li>
      </ul>
      <div className="flex h-[37px] items-center justify-between pr-[6px] text-[#9c9c9c]">0 Undo<button aria-label="Delete history" disabled className="text-[#4c4c4c]"><Svg w={13} h={15}><path d="M0 2.500h13M4.500 2.500v-2h4v2M1.500 3v11h10V3M4.500 5v7M6.500 5v7M8.500 5v7" strokeWidth="1.2" /></Svg></button></div>
    </section>
  );
}

/* ---------- editor ---------- */

const MAJOR = [0, 1, 2, 3, 4, 5, 6, 7].map((i) => 46 + i * 153.1);
const WAVE_LINES = [29, 51, 76, 126, 151, 172];
const WAVE_LABELS: [number, string][] = [[10, 'dB'], [29, '-3'], [50, '-6'], [75, '-12'], [101, '-∞'], [125, '-12'], [150, '-6'], [171, '-3']];
const WAVE_MINOR = [19, 36, 45, 55, 60, 64, 68, 70, 130, 132, 137, 141, 146, 156, 164, 181, 191];
const HZ_LABELS: [number, string, boolean][] = [
  [42, '16k', false], [58, '14k', false], [78, '12k', false], [102, '10k', true], [130, '8k', false], [148, '7k', false], [168, '6k', false], [192, '5k', false],
  [220, '4k', false], [259, '3k', false], [310, '2k', false], [400, '1k', true], [429, '800', false], [445, '700', false], [465, '600', false], [490, '500', false],
  [519, '400', false], [556, '300', false], [609, '200', false], [698, '100', true], [726, '80', false], [764, '60', false],
];
const THICK = [43, 103, 193, 338, 429, 533, 623, 697, 726, 758, 778];
const THIN = [14, 26, 59, 80, 116, 131, 150, 169, 221, 260, 311, 326, 354, 371, 390, 400, 414, 443, 446, 460, 480, 490, 504, 520, 557, 571, 610, 712, 741, 764, 801];

function Overview() {
  const d = useMemo(buildOverview, []);
  return (
    <svg className="block h-[35px] w-full overflow-visible bg-black" aria-label="Overview">
      <rect x={px(148)} y="0" width={px(104)} height="35" fill="#2c2c2c" />
      <line x1="0" x2="100%" y1="17.500" y2="17.500" stroke="#5cd8a0" strokeWidth="1" />
      <svg width="100%" height="35" viewBox="0 -17.5 1271 35" preserveAspectRatio="none"><path d={d} stroke="#4df0ac" strokeWidth="1.300" /></svg>
      <rect x={px(180)} y="1" width={px(13)} height="33" fill="#fbf8ff" />
      <line x1={px(181)} x2={px(181)} y1="1" y2="34" stroke="#b02020" />
      <line x1={px(182)} x2={px(191)} y1="17.500" y2="17.500" stroke="#777" strokeWidth="2" />
      <rect x={px(148.5)} y="-0.500" width={px(103)} height="36" rx="2" fill="none" stroke="#707070" strokeWidth="2" />
      {[149.5, 250.5].map((u) => (
        <svg key={u} x={px(u)} overflow="visible"><rect x="-3" y="3" width="6" height="30" rx="2" fill="#333" stroke="#707070" strokeWidth="2" /><path d="M0 6v24" stroke="#707070" /></svg>
      ))}
    </svg>
  );
}

function Ruler() {
  return (
    <svg className="block h-8 w-full overflow-hidden border-t-2 border-[#101010] bg-[#232323] text-[#a0a0a0]" aria-label="Timeline">
      <rect x={px(410)} width={px(160)} y="0" height="30" fill="#29423b" />
      <text x="4" y="16" fill="currentColor">hms</text>
      {MAJOR.map((u, i) => (
        <g key={u}>
          <text x={px(u + 1)} y="16" textAnchor="middle" fill="currentColor">{(1.3 + i / 10).toFixed(1)}</text>
          <line x1={px(u)} x2={px(u)} y1="21" y2="29" stroke="#a0a0a0" />
          <line x1={px(u + 77)} x2={px(u + 77)} y1="24" y2="29" stroke="#8a8a8a" />
        </g>
      ))}
      <text x={px(1264)} y="16" fill="currentColor">2.1</text>
      <svg x={px(487)} y="17" overflow="visible"><path d="M0 0v8M2.500 0v8M5 0v8M7.500 0v8" transform="translate(-2 1)" stroke="#a0a0a0" /></svg>
      <svg x={px(410)} overflow="visible"><path d="M-7 14h9v14l-9-8z" fill="#2a66a8" /><path d="M0 0v12l-3 3 3 3v12" fill="none" stroke="#b8b8b8" strokeWidth="1.500" /></svg>
      <svg x={px(419)} overflow="visible"><path d="M-8 14H7v9l-6 6h-3l-6-6z" fill="#2d8ceb" /></svg>
      <svg x={px(569)} overflow="visible"><path d="M0 0v12l3 3-3 3v12" fill="none" stroke="#b8b8b8" strokeWidth="1.500" /></svg>
    </svg>
  );
}

function Waveform() {
  const d = useMemo(buildWave, []);
  return (
    <svg className="block h-[202px] w-full bg-black" aria-label="Waveform">
      {WAVE_LINES.map((y) => <line key={y} x1="0" x2="100%" y1={y + 0.5} y2={y + 0.5} stroke="#0c300e" />)}
      {MAJOR.map((u) => <line key={u} x1={px(u)} x2={px(u)} y1="0" y2="202" stroke="#0e3210" strokeWidth="1" />)}
      <line x1="0" x2="100%" y1="101.500" y2="101.500" stroke="#7c2a22" />
      <svg y="0" width="100%" height="202" viewBox="0 -101.5 1271 202" preserveAspectRatio="none"><path d={d} fill="none" stroke="#50dc9e" strokeWidth="1" strokeLinejoin="bevel" /></svg>
      <line x1={px(410)} x2={px(410)} y1="0" y2="202" stroke="#7a1414" strokeDasharray="2 4" />
      <line x1={px(419)} x2={px(419)} y1="0" y2="202" stroke="#c00000" strokeWidth="2" />
    </svg>
  );
}

function Spectrogram() {
  const ref = useRef<HTMLCanvasElement>(null);
  useLayoutEffect(() => {
    const ctx = ref.current?.getContext('2d');
    if (ctx) paintSpectrogram(ctx);
  }, []);
  return (
    <div className="relative min-h-0 overflow-hidden bg-black">
      <canvas ref={ref} width={TRACK_W} height={SPEC_H} className="absolute inset-0 h-full w-full" />
      <svg className="absolute inset-0 h-full w-full" stroke="#c4c0cc" strokeOpacity="0.68" aria-label="Spectral frequency display">
        {THIN.map((v) => <line key={v} x1="0" x2="100%" y1={sy(v + 0.5)} y2={sy(v + 0.5)} strokeWidth="1" />)}
        {THICK.map((v) => <line key={v} x1="0" x2="100%" y1={sy(v)} y2={sy(v)} strokeWidth="2" />)}
        {MAJOR.map((u, i) => <line key={u} x1={px(u)} x2={px(u)} y1="0" y2="100%" strokeWidth={i === 2 || i === 7 ? 2 : 1} />)}
        <line x1={px(410)} x2={px(410)} y1="0" y2="100%" stroke="#e8d8d8" strokeDasharray="2 4" />
        <rect x={px(410)} y={sy(217)} width={px(159)} height={sy(29)} fill="#f0c0e8" fillOpacity="0.34" stroke="#ffe8f4" strokeDasharray="4 2" strokeOpacity="0.9" />
        {[[410, 217], [565, 217], [410, 242], [565, 242]].map(([u, v]) => <rect key={`${u}-${v}`} x={px(u)} y={sy(v)} width="5" height="5" fill="#f6e0f4" stroke="none" />)}
        <line x1={px(419)} x2={px(419)} y1="0" y2="100%" stroke="#ffc8c0" strokeOpacity="1" strokeWidth="2" />
      </svg>
      <div className="absolute left-[32.4%] top-[21%] flex h-8 w-[157px] items-center bg-[#331a1f]/85 text-[#a8a8a8]">
        <svg width="10" height="32" className="shrink-0 bg-[#5a4a4c]" aria-hidden="true"><path d="M3.500 10v13M6.500 10v13" stroke="#c8c8c8" strokeDasharray="1 1.500" /></svg>
        <span className="ml-1"><Ramp /></span>
        <span className="ml-[6px]"><Knob /></span>
        <span className="ml-[7px] whitespace-nowrap"><span className="text-[#2d8ceb]">+0</span> dB</span>
        <button aria-label="Pin" className="ml-auto flex h-6 w-[23px] items-center justify-center border-l border-[#5c4648] text-[#d0d0d0]"><Svg w={12} h={12}><path d="M1 11l4-4" /><path d="M7 1l4 4-2 .5L7.500 7v3L2 4.500h3L6.500 3z" fill="currentColor" strokeWidth="0.500" /></Svg></button>
      </div>
    </div>
  );
}

function Magnifier({ x, kind }: { x: number; kind?: '+' | '-' }) {
  return (
    <g>
      <circle cx={x} cy="10" r="6" strokeWidth="1.400" />
      <path d={`M${x + 4} 14.500l5 5`} strokeWidth="2.600" />
      {kind && <path d={`M${x - 3} 10h6`} strokeWidth="1.300" />}
      {kind === '+' && <path d={`M${x} 7v6`} strokeWidth="1.300" />}
    </g>
  );
}

const VArrow = () => <path d="M3 1v19M0.800 3.500L3 1l2.200 2.500M0.800 17.500L3 20l2.200-2.500" strokeWidth="1.300" />;
const HArrow = () => <path d="M1 2.500h20M3.500 0L1 2.500 3.500 5M18.500 0L21 2.500 18.500 5" strokeWidth="1.300" />;
const FourWay = () => (
  <g>
    <path d="M8.500 3L11 0l2.500 3zM8.500 18.500l2.500 3 2.500-3zM3 8v5L0.500 10.500zM19 8v5l2.500-2.500z" fill="currentColor" stroke="none" />
    <circle cx="11" cy="10" r="5.200" strokeWidth="1.300" />
    <path d="M8.500 10h5" strokeWidth="1.200" />
    <path d="M14.500 14l5 5" strokeWidth="2.400" />
  </g>
);

function TransportBar() {
  const fill = { fill: 'currentColor', stroke: 'none' } as const;
  const t: [string, string, React.ReactNode][] = [
    ['Stop', 'text-[#6a6a6a]', <path key="a" d="M4 4h12v12H4z" {...fill} />],
    ['Play', '', <path key="a" d="M5 4l12 6-12 6z" {...fill} />],
    ['Pause', 'text-[#555]', <path key="a" d="M5 4h3.500v12H5zM11 4h3.500v12H11z" {...fill} />],
    ['Go to start', '', <path key="a" d="M3 4h2.500v12H3zM17 4v12l-9-6z" {...fill} />],
    ['Rewind', '', <path key="a" d="M10 5v10l-9-5zM19 5v10l-9-5z" {...fill} />],
    ['Fast forward', '', <path key="a" d="M1 5v10l9-5zM10 5v10l9-5z" {...fill} />],
    ['Go to end', '', <path key="a" d="M14.500 4H17v12h-2.500zM3 4v12l9-6z" {...fill} />],
    ['Record', 'text-[#f23d3d]', <circle key="a" cx="10" cy="10.500" r="7" {...fill} />],
    ['Loop', 'text-[#2d8ceb]', <g key="a"><path d="M7 7H2.500v9h15V9" strokeWidth="2.500" /><path d="M5 7h5" strokeWidth="2.500" /><path d="M8 2l7 4.500L8 11z" {...fill} /></g>],
    ['Skip selection', '', <g key="a"><path d="M8.500 4v4l-2 2 2 2v4M11.500 4v4l2 2-2 2v4" strokeWidth="1.300" /><path d="M4.500 5.500L0 10l4.500 4.500V11H6V9H4.500zM15.500 5.500L20 10l-4.500 4.500V11H14V9h1.500z" {...fill} /></g>],
  ];
  const z: [string, React.ReactNode][] = [
    ['Zoom in amplitude', <g key="a"><VArrow /><Magnifier x={13} kind="+" /></g>],
    ['Zoom out amplitude', <g key="a"><VArrow /><Magnifier x={13} kind="-" /></g>],
    ['Zoom in time', <g key="a"><HArrow /><g transform="translate(0 2)"><Magnifier x={11} kind="+" /></g></g>],
    ['Zoom out time', <g key="a"><HArrow /><g transform="translate(0 2)"><Magnifier x={11} kind="-" /></g></g>],
    ['Zoom out full', <FourWay key="a" />],
    ['Zoom in point', <g key="a"><path d="M1 5v4l-2 2.500 2 2.500v5" strokeWidth="1.300" /><g transform="translate(0 1)"><Magnifier x={15} /></g></g>],
    ['Zoom out point', <g key="a"><path d="M1 5v4l2 2.500L1 14v5" strokeWidth="1.300" /><g transform="translate(0 1)"><Magnifier x={14} /></g></g>],
    ['Zoom to selection', <g key="a"><path d="M-2 5v4l-2 2.500L-2 14v5M2 5v4l2 2.500-2 2.500v5" strokeWidth="1.300" /><g transform="translate(0 1)"><Magnifier x={14} /></g></g>],
    ['Restart', <g key="a"><circle cx="11" cy="13" r="7" strokeWidth="1.800" /><path d="M11 13V5a8 8 0 0 1 5.500 3z" {...fill} /><path d="M8.500 1.500h5M11 1.500V6M2.500 7.500l4-3.500" strokeWidth="2.400" /></g>],
  ];
  return (
    <div className="flex h-[46px] items-center pl-1 pr-[23px] pt-px text-[#b4b4b4]">
      <output className="w-[406px] pt-[2px] text-[20px] leading-none text-[#2d8ceb]">0:01.542</output>
      <div className="flex gap-[17px]">
        {t.map(([label, cls, icon]) => <button key={label} aria-label={label} className={cls}><Svg w={20} h={20}>{icon}</Svg></button>)}
      </div>
      <div className="ml-auto flex gap-[15px]">
        {z.map(([label, icon]) => <button key={label} aria-label={label}><Svg w={22} h={22} className="overflow-visible">{icon}</Svg></button>)}
        <button aria-label="Zoom reset" disabled className="text-[#4a4a4a]"><Svg w={22} h={22}><path d="M0 1h6M0 20h6" strokeWidth="1.300" /><VArrow /><Magnifier x={13} kind="+" /></Svg></button>
      </div>
    </div>
  );
}

function EditorPanel() {
  return (
    <section className="flex min-w-0 flex-1 flex-col border border-[#2a6fb5] bg-[#232323] pl-[9px]" aria-label="Editor">
      <div className="flex pl-[5px]"><div className="w-[83px]"><Tab label="Mixer" /></div><Tab label="Editor: Host_001.wav" active onMenu /></div>
      <div className="mt-[13px] grid min-h-0 flex-1 grid-cols-[minmax(0,1fr)_92px] grid-rows-[35px_21px_32px_202px_12px_minmax(0,1fr)] pr-[9px]">
        <Overview />
        <div className="flex items-center gap-[15px] pl-4 text-[#b4b4b4]">
          <button aria-label="Zoom out full"><Svg w={22} h={22}><FourWay /></Svg></button>
          <button aria-label="Show channels"><Svg w={20} h={18}><rect x="1" y="1" width="18" height="16" fill="#555" /><path d="M1 5h18M1 9h18M1 13h18" strokeWidth="1.2" /></Svg></button>
        </div>
        <div className="col-span-2" />
        <Ruler />
        <div className="flex items-center pl-[9px] text-[#2d8ceb]">
          <button aria-label="Snapping" className="flex h-[26px] w-[27px] items-center justify-center rounded-l-[3px] border border-[#303030] bg-[#181818]"><Svg w={16} h={17}><path d="M4 16V8a4 4 0 0 1 8 0v8" strokeWidth="4" /><path d="M2 13h4M10 13h4" stroke="#181818" strokeWidth="1" /></Svg></button>
          <button aria-label="Marker" className="flex h-[26px] w-[27px] items-center justify-center rounded-r-[3px] border border-l-0 border-[#303030] bg-[#181818]"><Svg w={10} h={18}><path d="M0 0h10v5L7 8H3L0 5z" fill="currentColor" stroke="none" /><path d="M5 7v11" strokeWidth="1.600" /></Svg></button>
        </div>
        <Waveform />
        <svg className="h-full w-full border-r-2 border-t-2 border-[#101010] text-[#8f8f8f]" aria-hidden="true">
          {WAVE_LABELS.map(([y, t]) => <g key={y}><text x="11" y={y + 4} fill="currentColor">{t}</text><line x1="1" x2="5" y1={y - 0.5} y2={y - 0.5} stroke="#8a8a8a" /></g>)}
          {WAVE_MINOR.map((y) => <line key={y} x1="1" x2="3" y1={y - 0.5} y2={y - 0.5} stroke="#8a8a8a" />)}
        </svg>
        <div className="col-span-2 mb-px flex items-center bg-[#303030]">
          <span className="flex-1" />
          <svg width="30" height="5" aria-hidden="true" className="ml-6"><path d="M0 1h30M0 4h30" stroke="#8a8a8a" strokeDasharray="1 2" /></svg>
          <span className="flex flex-1 justify-end pr-[22px]"><Svg w={7} h={5} className="text-[#8a8a8a]"><path d="M0 0h7L3.500 4.500z" fill="currentColor" stroke="none" /></Svg></span>
        </div>
        <Spectrogram />
        <svg className="h-full w-full overflow-hidden border-b-2 border-r-2 border-[#101010]" aria-hidden="true">
          <text x="11" y="14" fill="#9c9c9c">Hz</text>
          {[14, 26, 116, 414].map((v) => <line key={v} x1="1" x2="4" y1={sy(v)} y2={sy(v)} stroke="#8a8a8a" />)}
          {HZ_LABELS.map(([v, t, strong]) => (
            <g key={t}>
              <line x1="1" x2={strong ? 6 : 4} y1={sy(v)} y2={sy(v)} stroke="#8a8a8a" strokeWidth={strong ? 2 : 1} />
              <text x="11" y={sy(v)} dy="5" fill={strong ? '#b0b0b0' : '#555'}>{t}</text>
            </g>
          ))}
        </svg>
      </div>
      <TransportBar />
    </section>
  );
}

/* ---------- frequency analysis ---------- */

const HOLD_BG = ['bg-[#ff0000]', 'bg-[#ff8000]', 'bg-[#ffff00]', 'bg-[#80ff00]', 'bg-[#40c040]', 'bg-[#00f0ff]', 'bg-[#2d8cff]', 'bg-[#ff00ff]'];
const DB = Array.from({ length: 21 }, (_, i) => -i * 5);
const dbY = (v: number) => `${((59.4 - v * 9.052) / 968) * 100}%`;
const hzX = (k: number) => `${((5 + k * 20.88) / 472) * 100}%`;

function FrequencyPanel() {
  const line = { fill: 'none', strokeWidth: 1.6, vectorEffect: 'non-scaling-stroke' } as const;
  return (
    <section className="flex w-[556px] shrink-0 flex-col bg-[#232323] pl-[13px] pr-[6px] text-[#8f8f8f]" aria-label="Frequency Analysis">
      <div className="flex h-[35px] items-center gap-[13px] pl-[2px] text-[#cfcfcf]">Frequency Analysis<MenuIcon /></div>
      <div className="mt-[10px] flex items-start">
        <label htmlFor="scale" className="w-10 leading-6">Scale:</label>
        <Select id="scale" value="Linear" className="w-[120px]" />
        <button aria-label="Copy" className="ml-[21px] mt-[5px]"><Svg w={19} h={18}><path d="M1 1h11v12H1z" /><path d="M15 7h3v10H7v-2" strokeDasharray="1.500 1.500" /></Svg></button>
        <span className="ml-5 mr-[5px] leading-6">Hold:</span>
        <div className="flex flex-1 justify-between pr-[22px]">
          {HOLD_BG.map((c, i) => (
            <div key={c}>
              <button className={`block h-[25px] w-[29px] rounded-[3px] border border-[#2e2e2e] ${i ? 'bg-[#1d1d1d]' : 'bg-[#161616] text-[#2d8ceb]'}`}>{i + 1}</button>
              <div className={`mt-[3px] h-[5px] w-[29px] ${c}`} />
            </div>
          ))}
        </div>
      </div>
      <div className="mr-2 mt-[13px] grid flex-1 grid-cols-[minmax(0,1fr)_50px] grid-rows-[minmax(0,1fr)_33px] border border-[#2b2b2b] pl-[5px] pt-[5px]">
        <svg className="h-full w-full bg-black" aria-label="Spectrum">
          {[5, ...DB].map((v) => <line key={v} x1="1" x2="100%" y1={dbY(v)} y2={dbY(v)} stroke="#062c08" />)}
          {[0, 5, 10, 15, 20].map((k) => <line key={k} x1={hzX(k)} x2={hzX(k)} y1="2" y2="100%" stroke="#072c09" />)}
          <text x="7" y="18" fill="#3a3a3a">Live CTI</text>
          <svg width="100%" height="100%" viewBox="64 -1089 1323 2051" preserveAspectRatio="none">
            <polyline points={HELD} stroke="#b01414" {...line} />
            <polyline points={SPECTRUM} stroke="#52dc9f" {...line} />
            {SPECTRUM_TAIL.map((p) => <polyline key={p} points={p} stroke="#52dc9f" {...line} />)}
          </svg>
        </svg>
        <svg className="h-full w-full overflow-visible" aria-hidden="true">
          <text x="16" y="9" fill="currentColor">dB</text>
          <line x1="1" x2="1" y1="2" y2="100%" stroke="#666" />
          {Array.from({ length: 107 }, (_, i) => 6 - i).map((v) => <line key={v} x1="1" x2={v % 5 ? 6 : 10} y1={dbY(v)} y2={dbY(v)} stroke="#8a8a8a" />)}
          {DB.map((v) => <text key={v} x="16" y={dbY(v)} dy="5" fill="currentColor">{v}</text>)}
        </svg>
        <svg className="h-full w-full overflow-visible" aria-hidden="true">
          <line x1="0" x2="100%" y1="1" y2="1" stroke="#777" />
          {Array.from({ length: 23 }, (_, k) => k).map((k) => <line key={k} x1={hzX(k)} x2={hzX(k)} y1="1" y2={k % 5 ? 6 : 9} stroke="#8a8a8a" />)}
          {[0, 5, 10, 15, 20].map((k) => <text key={k} x={hzX(k)} y="27" textAnchor="middle" fill="currentColor">{k ? `${k}k` : 'Hz'}</text>)}
        </svg>
      </div>
      <div className="mt-[38px] flex h-6 items-center whitespace-nowrap pr-px">
        <label htmlFor="display" className="w-[51px]">Display:</label>
        <Select id="display" value="Lines" className="w-[92px]" />
        <label htmlFor="channel" className="ml-[17px] w-[84px]">Top Channel:</label>
        <Select id="channel" value="Channel 1" className="w-[145px]" />
        <button className="ml-auto h-6 w-[132px] rounded-full border-2 border-[#808080] leading-none text-[#a8a8a8]">Scan Selection</button>
      </div>
      <button className="mb-2 mt-[6px] flex h-6 items-center gap-[18px] pl-px text-[#c0c0c0]"><Svg w={6} h={9}><path d="M1 1l3.500 3.500L1 8" /></Svg>Advanced</button>
    </section>
  );
}

/* ---------- bottom row ---------- */

function LevelsPanel() {
  return (
    <section className="min-w-0 flex-1 bg-[#232323] pl-2 pr-[7px]" aria-label="Levels">
      <div className="flex h-10 items-center gap-[14px] pb-1 pl-[7px] text-[#cfcfcf]">Levels<MenuIcon /></div>
      <div className="flex h-[54px] justify-between border-2 border-black bg-[#1d1d1d]"><div className="w-[2px] bg-[#8c8c1e]" /><div className="w-[14px] border-l-2 border-black" /></div>
      <div className="pl-px pr-[15px] text-[11px] text-[#8f8f8f]">
        <svg className="block h-6 w-full overflow-visible" aria-hidden="true">
          {METER_TICKS.map((t) => <line key={t} x1={`${(t / 60) * 100}%`} x2={`${(t / 60) * 100}%`} y1="0" y2={t % 3 ? 2 : 5} stroke="#8a8a8a" />)}
          <text x="5" y="19" textAnchor="middle" fill="currentColor">dB</text>
          {Array.from({ length: 20 }, (_, i) => -57 + i * 3).map((v) => <text key={v} x={`${((60 + v) / 60) * 100}%`} y="19" textAnchor="middle" fill="currentColor">{v}</text>)}
        </svg>
      </div>
    </section>
  );
}

function SelectionPanel() {
  const rows = [['Selection', '0:01.537', '0:01.641', '0:00.104'], ['View', '0:01.268', '0:02.099', '0:00.831']];
  return (
    <section className="w-[346px] shrink-0 bg-[#232323] pl-[14px] text-[#8f8f8f]" aria-label="Selection/View">
      <div className="flex h-9 items-center gap-[14px] pl-px text-[#cfcfcf]">Selection/View<MenuIcon /></div>
      <table className="table-fixed border-collapse text-left">
        <colgroup><col className="w-[64px]" /><col className="w-[89px]" /><col className="w-[89px]" /><col className="w-[88px]" /></colgroup>
        <thead><tr className="h-6"><td />{['Start', 'End', 'Duration'].map((h) => <th key={h} className="p-0 font-normal">{h}</th>)}</tr></thead>
        <tbody>
          {rows.map(([n, ...vals]) => <tr key={n} className="h-[26px]"><th className="p-0 font-normal">{n}</th>{vals.map((v) => <td key={v} className="p-0 text-[#2d8ceb]">{v}</td>)}</tr>)}
        </tbody>
      </table>
    </section>
  );
}

function StatusBar() {
  const cell = 'flex h-[18px] items-center whitespace-nowrap border-l border-[#303030]';
  const dot = <span className="mx-[4px] font-['DejaVu_Sans',sans-serif] text-[10px]">●</span>;
  return (
    <footer className="flex h-6 items-center bg-[#232323] pl-[10px] pt-[2px] text-[#9c9c9c]">
      Stopped
      <div className="ml-auto flex pt-[2px]">
        <span className={`${cell} w-[63px]`} /><span className={`${cell} w-[132px]`} />
        <span className={`${cell} w-[180px] pl-[10px]`}>44100 Hz{dot}16-bit{dot}Mono</span>
        <span className={`${cell} w-20 pl-[10px]`}>931.12 KB</span>
        <span className={`${cell} w-[83px] justify-end pr-2`}>0:10.810</span>
        <span className={`${cell} w-[101px] pl-[10px]`}>36.39 GB free</span>
        <span className={`${cell} w-[185px]`} />
      </div>
    </footer>
  );
}

export default function App() {
  return (
    <div className="flex h-screen w-full flex-col overflow-hidden bg-[#171717] font-['Noto_Sans_CJK_SC','Noto_Sans',sans-serif] text-[13px] leading-4">
      <TitleBar />
      <Toolbar />
      <main className="mt-1 flex min-h-0 flex-1 gap-[6px] px-px">
        <div className="flex w-[607px] shrink-0 flex-col gap-[6px]">
          <FilesPanel />
          <EffectsPanel />
          <HistoryPanel />
        </div>
        <div className="flex min-w-0 flex-1 flex-col gap-[6px]">
          <div className="flex min-h-0 flex-1 gap-[6px]"><EditorPanel /><FrequencyPanel /></div>
          <div className="flex h-[119px] gap-[6px]"><LevelsPanel /><SelectionPanel /></div>
        </div>
      </main>
      <div className="mt-[2px]"><StatusBar /></div>
      <div className="flex h-[2px] bg-[#d0d0d0]"><div className="ml-[34%] w-[200px] bg-white" /></div>
    </div>
  );
}
